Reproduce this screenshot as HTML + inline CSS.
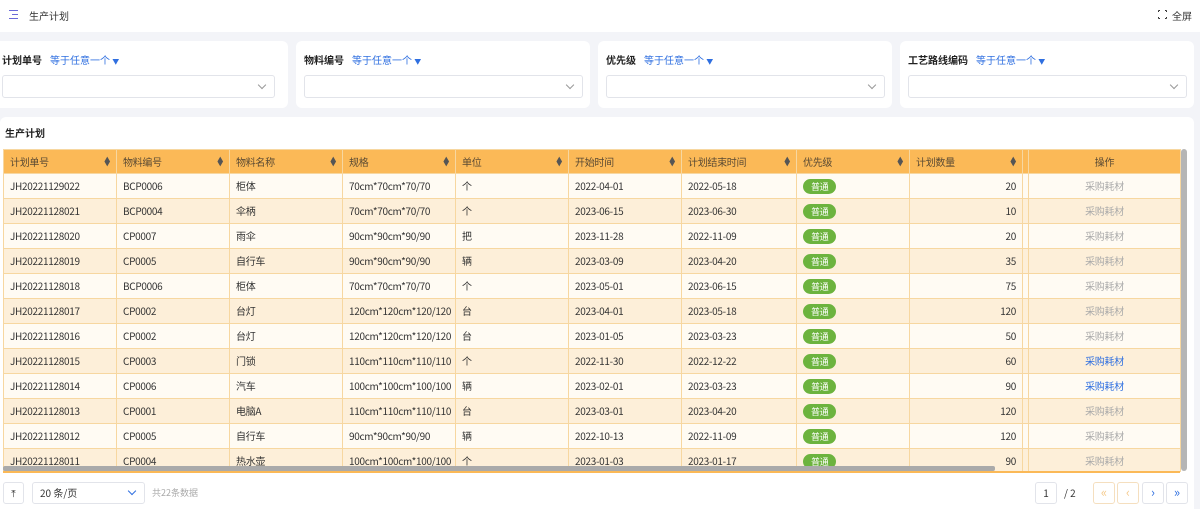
<!DOCTYPE html>
<html><head><meta charset="utf-8"><style>
*{box-sizing:border-box;margin:0;padding:0}
body{width:1200px;height:509px;overflow:hidden;background:#f3f4f8;font-family:"Noto Sans CJK SC","Liberation Sans",sans-serif;font-size:10px;color:#333;position:relative}
.abs{position:absolute}
.top{left:0;top:0;width:1200px;height:32px;background:#fff}
.card{background:#fff;border-radius:6px;top:41px;height:67px}
.lbl{top:11px;font-size:10px;font-weight:bold;color:#222}
.op{color:#2f6fe0;font-weight:normal;margin-left:8px}
.inp{top:34px;height:23px;border:1px solid #e2e4ea;border-radius:3px;background:#fff}
.chev{position:absolute;right:9px;top:6px;width:6px;height:6px;border-right:1px solid #999;border-bottom:1px solid #999;transform:rotate(45deg)}
table{border-collapse:collapse;table-layout:fixed;position:absolute;left:3px;top:149px;width:1177px;letter-spacing:-0.3px}
td,th{height:25px;line-height:14px;vertical-align:middle;border:1px solid #f7d7a0;padding:0 6px;font-size:10px;white-space:nowrap;overflow:hidden;text-align:left;font-weight:normal}
th{background:#fbb957;color:#5a4a33;height:24px;position:relative}
th .s{position:absolute;right:6px;top:8px;font-size:6px;line-height:4px;color:#555}
tr.o td{background:#fffbf3}
tr.e td{background:#fdefd9}
.tag{display:inline-block;background:#6cb33e;color:#fff;border-radius:8px;padding:0 8px;height:15px;line-height:15px;font-size:9px;vertical-align:middle}
td.r{text-align:right}
td.c,th.c{text-align:center}
.g{color:#aaa}.b{color:#2f6fe0}
.btn{border:1px solid #e2e4ea;border-radius:3px;background:#fff;height:22px;top:482px}
</style></head><body>
<div class="abs top">
 <div class="abs" style="left:9px;top:10px;width:9px;height:10px">
  <div class="abs" style="left:0;top:0;width:9px;height:1px;background:#6a6ad8"></div>
  <div class="abs" style="left:3px;top:4px;width:6px;height:1px;background:#6a6ad8"></div>
  <div class="abs" style="left:0;top:8px;width:9px;height:1px;background:#6a6ad8"></div>
 </div>
 <div class="abs" style="left:29px;top:8px;font-size:10px">生产计划</div>
 <div class="abs" style="left:1158px;top:10px;width:9px;height:9px;border:1px solid #333;border-radius:1px"></div>
 <div class="abs" style="left:1160px;top:8px;width:5px;height:13px;background:#fff"></div>
 <div class="abs" style="left:1156px;top:12px;width:13px;height:5px;background:#fff"></div>
 <div class="abs" style="left:1172px;top:8px;font-size:10px">全屏</div>
</div>

<div class="abs card" style="left:-6px;width:294px"><div class="abs lbl" style="left:8px">计划单号<span class="op">等于任意一个 <span style="font-size:7px">▼</span></span></div><div class="abs inp" style="left:8px;width:273px"><i class="chev"></i></div></div>
<div class="abs card" style="left:296px;width:294px"><div class="abs lbl" style="left:8px">物料编号<span class="op">等于任意一个 <span style="font-size:7px">▼</span></span></div><div class="abs inp" style="left:8px;width:279px"><i class="chev"></i></div></div>
<div class="abs card" style="left:598px;width:294px"><div class="abs lbl" style="left:8px">优先级<span class="op">等于任意一个 <span style="font-size:7px">▼</span></span></div><div class="abs inp" style="left:8px;width:279px"><i class="chev"></i></div></div>
<div class="abs card" style="left:900px;width:294px"><div class="abs lbl" style="left:8px">工艺路线编码<span class="op">等于任意一个 <span style="font-size:7px">▼</span></span></div><div class="abs inp" style="left:8px;width:279px"><i class="chev"></i></div></div>

<div class="abs" style="left:0;top:117px;width:1194px;height:392px;background:#fff;border-radius:6px 6px 0 0"></div>
<div class="abs" style="left:5px;top:125px;font-weight:bold;font-size:10px;color:#222">生产计划</div>

<table>
<colgroup><col style="width:113px"><col style="width:113px"><col style="width:113px"><col style="width:113px"><col style="width:113px"><col style="width:113px"><col style="width:115px"><col style="width:113px"><col style="width:113px"><col style="width:6px"><col style="width:152px"></colgroup>
<tr><th>计划单号<span class="s">▲<br>▼</span></th><th>物料编号<span class="s">▲<br>▼</span></th><th>物料名称<span class="s">▲<br>▼</span></th><th>规格<span class="s">▲<br>▼</span></th><th>单位<span class="s">▲<br>▼</span></th><th>开始时间<span class="s">▲<br>▼</span></th><th>计划结束时间<span class="s">▲<br>▼</span></th><th>优先级<span class="s">▲<br>▼</span></th><th>计划数量<span class="s">▲<br>▼</span></th><th style="padding:0"></th><th class="c">操作</th></tr>
<tr class="o"><td>JH20221129022</td><td>BCP0006</td><td>柜体</td><td>70cm*70cm*70/70</td><td>个</td><td>2022-04-01</td><td>2022-05-18</td><td><span class="tag">普通</span></td><td class="r">20</td><td></td><td class="c g">采购耗材</td></tr>
<tr class="e"><td>JH20221128021</td><td>BCP0004</td><td>伞柄</td><td>70cm*70cm*70/70</td><td>个</td><td>2023-06-15</td><td>2023-06-30</td><td><span class="tag">普通</span></td><td class="r">10</td><td></td><td class="c g">采购耗材</td></tr>
<tr class="o"><td>JH20221128020</td><td>CP0007</td><td>雨伞</td><td>90cm*90cm*90/90</td><td>把</td><td>2023-11-28</td><td>2022-11-09</td><td><span class="tag">普通</span></td><td class="r">20</td><td></td><td class="c g">采购耗材</td></tr>
<tr class="e"><td>JH20221128019</td><td>CP0005</td><td>自行车</td><td>90cm*90cm*90/90</td><td>辆</td><td>2023-03-09</td><td>2023-04-20</td><td><span class="tag">普通</span></td><td class="r">35</td><td></td><td class="c g">采购耗材</td></tr>
<tr class="o"><td>JH20221128018</td><td>BCP0006</td><td>柜体</td><td>70cm*70cm*70/70</td><td>个</td><td>2023-05-01</td><td>2023-06-15</td><td><span class="tag">普通</span></td><td class="r">75</td><td></td><td class="c g">采购耗材</td></tr>
<tr class="e"><td>JH20221128017</td><td>CP0002</td><td>台灯</td><td>120cm*120cm*120/120</td><td>台</td><td>2023-04-01</td><td>2023-05-18</td><td><span class="tag">普通</span></td><td class="r">120</td><td></td><td class="c g">采购耗材</td></tr>
<tr class="o"><td>JH20221128016</td><td>CP0002</td><td>台灯</td><td>120cm*120cm*120/120</td><td>台</td><td>2023-01-05</td><td>2023-03-23</td><td><span class="tag">普通</span></td><td class="r">50</td><td></td><td class="c g">采购耗材</td></tr>
<tr class="e"><td>JH20221128015</td><td>CP0003</td><td>门锁</td><td>110cm*110cm*110/110</td><td>个</td><td>2022-11-30</td><td>2022-12-22</td><td><span class="tag">普通</span></td><td class="r">60</td><td></td><td class="c b">采购耗材</td></tr>
<tr class="o"><td>JH20221128014</td><td>CP0006</td><td>汽车</td><td>100cm*100cm*100/100</td><td>辆</td><td>2023-02-01</td><td>2023-03-23</td><td><span class="tag">普通</span></td><td class="r">90</td><td></td><td class="c b">采购耗材</td></tr>
<tr class="e"><td>JH20221128013</td><td>CP0001</td><td>电脑A</td><td>110cm*110cm*110/110</td><td>台</td><td>2023-03-01</td><td>2023-04-20</td><td><span class="tag">普通</span></td><td class="r">120</td><td></td><td class="c g">采购耗材</td></tr>
<tr class="o"><td>JH20221128012</td><td>CP0005</td><td>自行车</td><td>90cm*90cm*90/90</td><td>辆</td><td>2022-10-13</td><td>2022-11-09</td><td><span class="tag">普通</span></td><td class="r">120</td><td></td><td class="c g">采购耗材</td></tr>
<tr class="e"><td>JH20221128011</td><td>CP0004</td><td>热水壶</td><td>100cm*100cm*100/100</td><td>个</td><td>2023-01-03</td><td>2023-01-17</td><td><span class="tag">普通</span></td><td class="r">90</td><td></td><td class="c g">采购耗材</td></tr>
</table>
<div class="abs" style="left:0;top:472px;width:1194px;height:37px;background:#fff"></div>
<div class="abs" style="left:3px;top:471px;width:1177px;height:2px;background:#fbb957"></div>
<div class="abs" style="left:3px;top:466px;width:992px;height:5px;background:#aaa;border-radius:2px"></div>
<div class="abs" style="left:1181px;top:149px;width:6px;height:322px;background:#b5b5b5;border-radius:3px"></div>

<div class="abs btn" style="left:3px;width:21px;text-align:center;line-height:20px;font-size:10px">⤒</div>
<div class="abs btn" style="left:32px;width:113px;padding-left:7px;line-height:20px;font-size:10px">20 条/页<i class="chev" style="top:5px;border-color:#2f6fe0"></i></div>
<div class="abs" style="left:152px;top:486px;font-size:9px;color:#aaa">共22条数据</div>
<div class="abs btn" style="left:1035px;width:22px;text-align:center;line-height:20px">1</div>
<div class="abs" style="left:1064px;top:485px;font-size:10px">/ 2</div>
<div class="abs btn" style="left:1093px;width:22px;text-align:center;line-height:18px;font-size:13px;color:#f5c98a;border-color:#f5dfbf">«</div>
<div class="abs btn" style="left:1117px;width:22px;text-align:center;line-height:18px;font-size:13px;color:#f5c98a;border-color:#f5dfbf">‹</div>
<div class="abs btn" style="left:1142px;width:22px;text-align:center;line-height:18px;font-size:13px;color:#2f6fe0">›</div>
<div class="abs btn" style="left:1166px;width:22px;text-align:center;line-height:18px;font-size:13px;color:#2f6fe0">»</div>
</body></html>
